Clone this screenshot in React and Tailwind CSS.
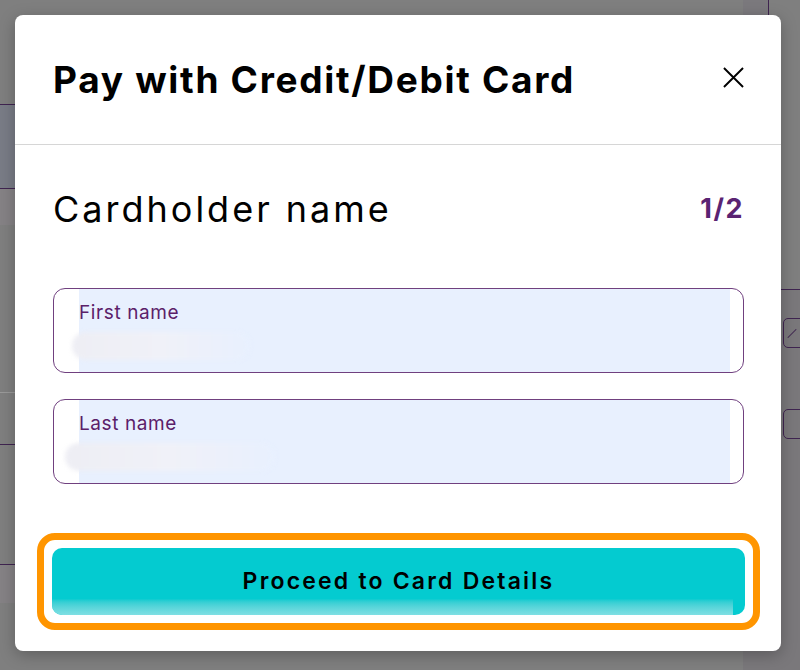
import React from 'react';

const font = { fontFamily: 'Inter, "Noto Sans", sans-serif' };

function NameField({ label, smear }) {
  return (
    <div className="flex h-[85px] rounded-[12px] border-[1.5px] border-[#70407f] overflow-hidden">
      <div className="ml-[25px] mr-[13px] flex-1 bg-[#e8f0fe] pt-[12px]">
        <div className="text-[19px] leading-[23px] tracking-[0.6px] text-[#5b2069]">{label}</div>
        <div
          className={`mt-[8px] h-[28px] rounded-full blur-[2px] bg-gradient-to-r from-[#eeeef4] via-[#f0f1f8] to-[#e8f0fe] ${smear}`}
        />
      </div>
    </div>
  );
}

export default function App() {
  return (
    <div className="relative h-[670px] w-full overflow-hidden bg-[#7f7f7f]" style={font}>
      {/* page behind the backdrop */}
      <div className="flex h-full">
        <div className="flex w-[15px] flex-col">
          <div className="h-[104px]" />
          <div className="h-[85px] border-y border-[#3f2450] bg-[#797c86]" />
          <div className="h-[36px] bg-[#858285]" />
          <div className="h-[168px] border-b border-[#9a9a9a]" />
          <div className="h-[52px] border-b border-[#3f2450]" />
          <div className="h-[120px] border-b border-[#3f2450]" />
          <div className="h-[38px] bg-[#858285]" />
        </div>
        <div className="flex-1" />
        <div className="flex w-[57px] flex-col">
          <div className="flex h-[289px]">
            <div className="w-[25px] bg-[#7b797d]" />
            <div className="w-px bg-[#3f2450]" />
          </div>
          <div className="flex flex-1 flex-col border-t border-[#3f2450] bg-[#7a787b] pl-[40px]">
            <div className="mt-[28px] flex h-[30px] w-[24px] items-center rounded-[5px] border border-[#3f2450] pl-[2px]">
              <div className="h-px w-[12px] -rotate-45 bg-[#3f2450]" />
            </div>
            <div className="mt-[61px] h-[30px] w-[24px] rounded-[5px] border border-[#3f2450]" />
          </div>
        </div>
      </div>

      {/* dialog */}
      <div className="absolute left-[15px] top-[15px] flex h-[636px] w-[766px] flex-col rounded-[8px] bg-white shadow-[0_4px_16px_rgba(0,0,0,0.25)]">
        <div className="flex h-[130px] items-center justify-between border-b border-[#d6d6d6] pl-[38px] pr-[36px]">
          <h1 className="text-[37px] font-bold tracking-[1.7px] text-black">Pay with Credit/Debit Card</h1>
          <button className="-mt-[4px] flex h-[24px] w-[24px] items-center justify-center text-black">
            <svg width="21" height="21" viewBox="0 0 22 22" fill="none" stroke="currentColor" strokeWidth="2">
              <path d="M1 1 L21 21 M21 1 L1 21" />
            </svg>
          </button>
        </div>

        <div className="flex flex-1 flex-col pl-[38px] pr-[37px] pb-[21px]">
          <div className="flex h-[128px] items-center justify-between">
            <h2 className="text-[36px] font-normal tracking-[3px] text-black">Cardholder name</h2>
            <span className="text-[27px] font-bold tracking-[1.5px] text-[#5a2372]">1/2</span>
          </div>

          <div className="mt-[15px] flex flex-col gap-[26px]">
            <NameField label="First name" smear="-ml-[7px] w-[178px]" />
            <NameField label="Last name" smear="-ml-[14px] w-[210px]" />
          </div>

          <div className="mt-auto -mx-[16px] rounded-[18px] border-[7px] border-[#ff9500] p-[8px]">
            <button className="relative flex h-[67px] w-full items-center justify-center overflow-hidden rounded-[10px] bg-[#04cbd0]">
              <span className="relative z-10 text-[23px] font-semibold tracking-[2.2px] text-black">Proceed to Card Details</span>
              <span className="absolute bottom-0 left-0 right-[12px] h-[16px] bg-gradient-to-b from-[#04cbd0] to-[#7fdfe3]" />
            </button>
          </div>
        </div>
      </div>
    </div>
  );
}
